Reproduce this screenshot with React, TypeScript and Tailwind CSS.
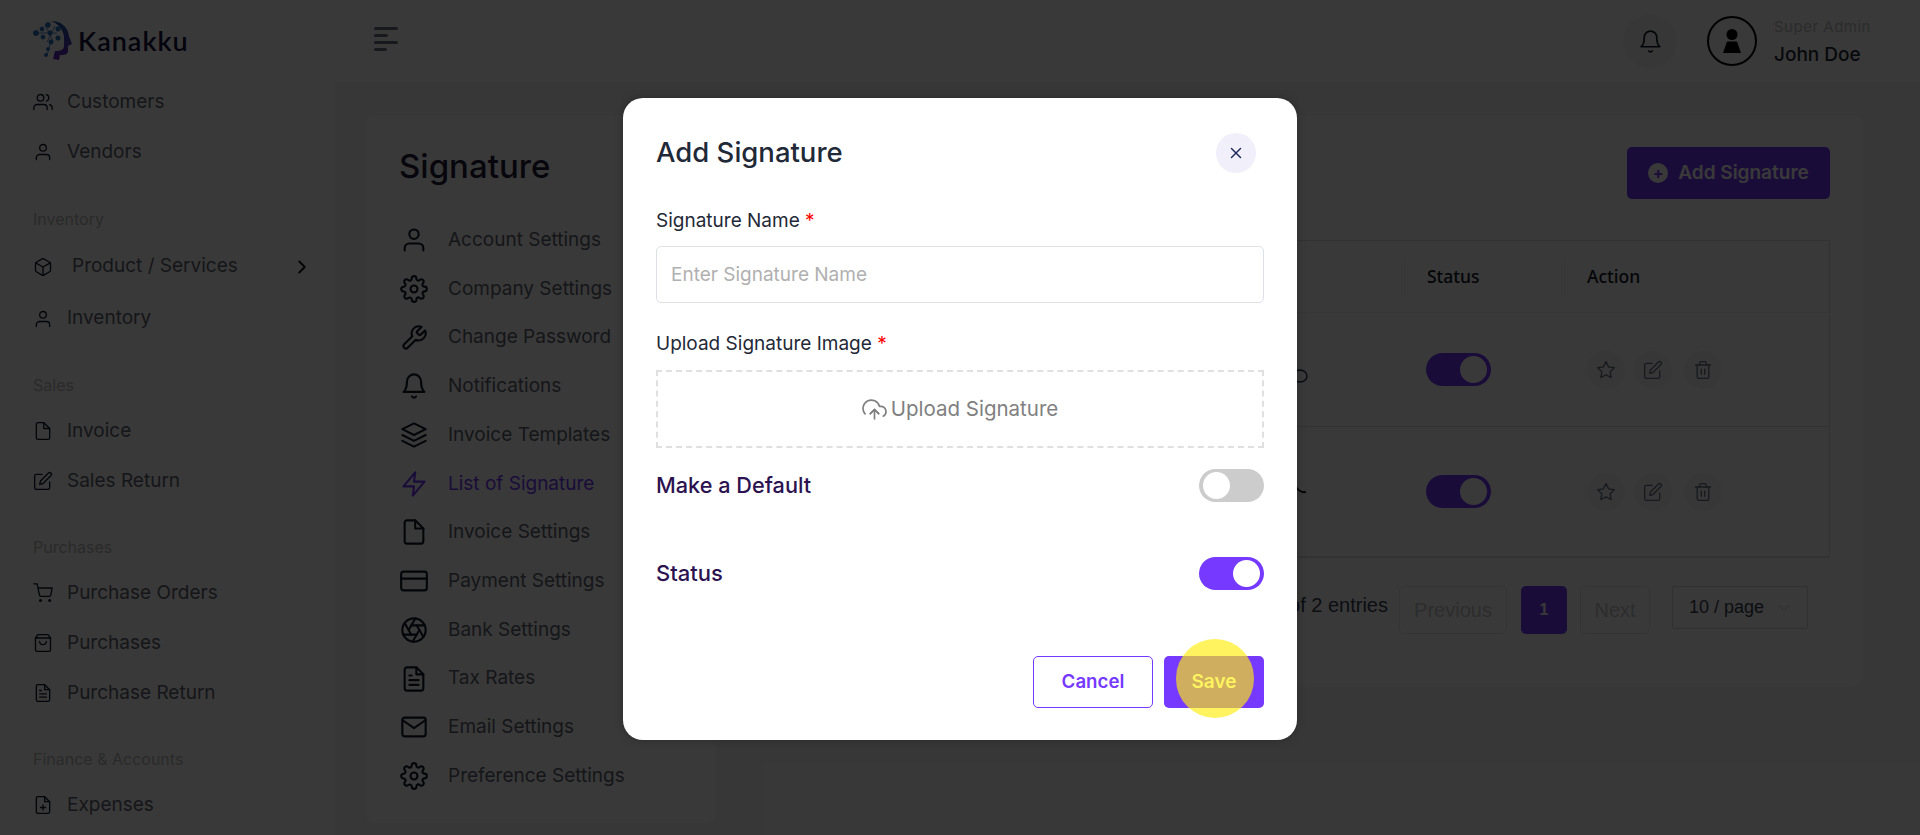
import React from "react";
import { FiUsers, FiUser, FiBox, FiChevronRight, FiFile, FiEdit, FiShoppingCart, FiShoppingBag, FiFileText, FiFilePlus, FiSettings, FiTool, FiBell, FiLayers, FiZap, FiCreditCard, FiAperture, FiMail, FiStar, FiTrash2, FiUploadCloud, FiX, FiChevronDown } from "react-icons/fi";

function Logo() {
  return (
    <svg width="40" height="42" viewBox="0 0 40 42" className="shrink-0">
      <defs>
        <linearGradient id="lg" x1="0" y1="0" x2="0" y2="1">
          <stop offset="0" stopColor="#1d5fa8" />
          <stop offset="1" stopColor="#6a1fc0" />
        </linearGradient>
      </defs>
      <path d="M18 1c10 0 17 6 18 15l3 8-4 2v5c0 3-3 4-6 4h-2l-1 5-6-1 2-8c5 0 9-1 9-5V20c1-8-5-16-13-19z" fill="url(#lg)" />
      <g fill="#2a74c4" stroke="#2a74c4" strokeWidth="0.8">
        <line x1="4" y1="13" x2="24" y2="13" />
        <line x1="12" y1="5" x2="20" y2="21" />
        <line x1="22" y1="6" x2="14" y2="22" />
        <line x1="17" y1="24" x2="14" y2="36" />
        <circle cx="3" cy="13" r="2.6" />
        <circle cx="9" cy="9" r="2" />
        <circle cx="10" cy="17" r="2" />
        <circle cx="15" cy="5" r="2.4" />
        <circle cx="17" cy="13" r="2.2" />
        <circle cx="25" cy="9" r="2.2" />
        <circle cx="25" cy="18" r="2.2" />
        <circle cx="18" cy="22" r="2.2" />
        <circle cx="15" cy="29" r="1.6" />
        <circle cx="13" cy="35" r="1.6" />
      </g>
    </svg>
  );
}

function SideItem({ icon: Icon, label, h = "h-[50px]" }: { icon: any; label: string; h?: string }) {
  return (
    <div className={`flex items-center gap-[14px] ${h}`}>
      <Icon size={20} strokeWidth={1.6} className="text-[#111827] shrink-0" />
      <span className="text-[19px] text-[#5f6470]">{label}</span>
    </div>
  );
}

function SideLabel({ children, pt = "pt-[30px]" }: { children: React.ReactNode; pt?: string }) {
  return <div className={`${pt} pb-[10px] leading-[22px] text-[16px] text-[#bcbcbc]`}>{children}</div>;
}

const settings: [any, string, boolean?][] = [
  [FiUser, "Account Settings"],
  [FiSettings, "Company Settings"],
  [FiTool, "Change Password"],
  [FiBell, "Notifications"],
  [FiLayers, "Invoice Templates"],
  [FiZap, "List of Signature", true],
  [FiFile, "Invoice Settings"],
  [FiCreditCard, "Payment Settings"],
  [FiAperture, "Bank Settings"],
  [FiFileText, "Tax Rates"],
  [FiMail, "Email Settings"],
  [FiSettings, "Preference Settings"],
];

function ActionBtn({ icon: Icon, className = "" }: { icon: any; className?: string }) {
  return (
    <div className={`w-[38px] h-[38px] rounded-full bg-[#f5f5f7] flex items-center justify-center ${className}`}>
      <Icon size={20} strokeWidth={1.6} className="text-[#6b7280]" />
    </div>
  );
}

function PageToggle() {
  return (
    <div className="w-[65px] h-[33px] rounded-full bg-[#7539ff] flex items-center justify-end pr-[4px]">
      <div className="w-[27px] h-[27px] rounded-full bg-white" />
    </div>
  );
}

function Row({ h, art, border }: { h: string; art: React.ReactNode; border: string }) {
  return (
    <div className={`grid grid-cols-[653px_160px_1fr] ${h} ${border}`}>
      <div className="flex items-center justify-end pr-[94px]">{art}</div>
      <div className="flex items-center pl-[22px]"><PageToggle /></div>
      <div className="flex items-center gap-[9px] pl-[23px]">
        <ActionBtn icon={FiStar} />
        <ActionBtn icon={FiEdit} />
        <ActionBtn icon={FiTrash2} className="ml-[3px]" />
      </div>
    </div>
  );
}

export default function App() {
  return (
    <div className="relative h-[835px] w-full overflow-hidden bg-white font-['Inter',sans-serif]">
      <div className="flex h-full">
        <aside className="w-[335px] shrink-0 pl-[33px] bg-white">
          <div className="h-[77px] pt-[20px]">
            <div className="flex items-center gap-[5px]">
              <Logo />
              <span className="text-[27px] font-semibold text-[#131340] font-['Lato','Inter',sans-serif] tracking-[1px]">Kanakku</span>
            </div>
          </div>
          <SideItem icon={FiUsers} label="Customers" />
          <SideItem icon={FiUser} label="Vendors" />
          <SideLabel pt="pt-[31px]">Inventory</SideLabel>
          <div className="flex items-center h-[53px]">
            <FiBox size={20} strokeWidth={1.6} className="text-[#111827] shrink-0" />
            <span className="ml-[19px] text-[19px] text-[#5f6470]">Product / Services</span>
            <FiChevronRight size={22} strokeWidth={2} className="ml-[53px] text-[#111111]" />
          </div>
          <SideItem icon={FiUser} label="Inventory" h="h-[51px]" />
          <SideLabel>Sales</SideLabel>
          <SideItem icon={FiFile} label="Invoice" />
          <SideItem icon={FiEdit} label="Sales Return" />
          <SideLabel>Purchases</SideLabel>
          <SideItem icon={FiShoppingCart} label="Purchase Orders" />
          <SideItem icon={FiShoppingBag} label="Purchases" />
          <SideItem icon={FiFileText} label="Purchase Return" />
          <SideLabel>Finance &amp; Accounts</SideLabel>
          <SideItem icon={FiFilePlus} label="Expenses" />
        </aside>

        <div className="flex-1 flex flex-col min-w-0">
          <header className="h-[82px] shrink-0 bg-white flex items-center pl-[39px] pr-[46px]">
            <div className="flex flex-col gap-[4px] w-[24px] mb-[5px]">
              <div className="h-[3px] w-[24px] bg-[#6b7280] rounded-sm" />
              <div className="h-[3px] w-[14px] bg-[#6b7280] rounded-sm" />
              <div className="h-[3px] w-[24px] bg-[#6b7280] rounded-sm" />
              <div className="h-[3px] w-[13px] bg-[#6b7280] rounded-sm" />
            </div>
            <div className="ml-auto w-[54px] h-[54px] rounded-full bg-[#f7f7f9] flex items-center justify-center">
              <FiBell size={25} strokeWidth={1.6} className="text-[#111827]" />
            </div>
            <div className="ml-[30px] w-[50px] h-[50px] rounded-full border-[2.5px] border-black flex items-center justify-center">
              <svg width="18" height="24" viewBox="0 0 18 24">
                <circle cx="9" cy="5.5" r="5.5" fill="#000" />
                <path d="M4 12.5h10l4 11.5H0z" fill="#000" />
              </svg>
            </div>
            <div className="ml-[17px] w-[100px] flex flex-col pt-[1px]">
              <span className="text-[15px] leading-[26px] text-[#c2c2c2] whitespace-nowrap tracking-[0.5px]">Super Admin</span>
              <span className="text-[19px] leading-[30px] font-medium text-[#1f2937] whitespace-nowrap">John Doe</span>
            </div>
          </header>

          <main className="flex-1 bg-[#f7f7f7] pl-[31px] pr-[58px] pt-[33px] relative">
            <div className="h-[572px] bg-white rounded-[10px] flex">
              <div className="w-[350px] shrink-0 h-[708px] bg-white rounded-[10px] pl-[34px] pt-[32px]">
                <h1 className="text-[33px] leading-[38px] font-medium text-[#1f1b3a] -ml-[1px]">Signature</h1>
                <div className="mt-[31px] flex flex-col">
                  {settings.map(([Icon, label, active]) => (
                    <div key={label} className="flex items-center h-[48.7px]">
                      <Icon size={28} strokeWidth={1.8} className={active ? "text-[#7539ff] shrink-0" : "text-[#111827] shrink-0"} />
                      <span className={`ml-[20px] text-[19px] whitespace-nowrap ${active ? "text-[#7539ff]" : "text-[#5f6470]"}`}>{label}</span>
                    </div>
                  ))}
                </div>
              </div>
              <div className="flex-1 min-w-0 pl-[34px] pr-[32px] pt-[32px]">
                <div className="flex justify-end">
                  <div className="w-[203px] h-[52px] rounded-[5px] bg-[#7539ff] flex items-center justify-center gap-[10px]">
                    <span className="w-[20px] h-[20px] rounded-full bg-white text-[#7539ff] flex items-center justify-center text-[16px] font-bold leading-none">+</span>
                    <span className="text-[19px] font-semibold text-white">Add Signature</span>
                  </div>
                </div>
                <div className="mt-[41px] border border-[#d9dde0] border-b-2">
                  <div className="grid grid-cols-[653px_160px_1fr] h-[72px] border-b border-[#f0f1f3] items-center text-[17.5px] font-medium text-[#111827] font-['Noto_Sans',sans-serif]">
                    <div />
                    <div className="pl-[22px] border-l border-[#f0f1f3] h-[40px] flex items-center">Status</div>
                    <div className="pl-[22px] border-l border-[#f0f1f3] h-[40px] flex items-center">Action</div>
                  </div>
                  <Row
                    h="h-[114px]"
                    border="border-b border-[#d9dde0]"
                    art={<svg width="60" height="30" viewBox="0 0 60 30" fill="none" stroke="#1f2937" strokeWidth="1.4"><ellipse cx="50" cy="21" rx="7" ry="6" /></svg>}
                  />
                  <Row
                    h="h-[129px]"
                    border=""
                    art={<svg width="60" height="30" viewBox="0 0 60 30" fill="none" stroke="#111" strokeWidth="1.8"><path d="M46 10c3 4 6 6 10 5" /></svg>}
                  />
                </div>
                <div className="mt-[28px] pr-[22px] flex items-start justify-end font-['Liberation_Sans',sans-serif] text-[#9ca3af]">
                  <span className="mr-[11px] mt-[5px] text-[20px] leading-[28px] whitespace-nowrap text-[#374151]">Showing 1 to 2 of 2 entries</span>
                  <div className="w-[108px] h-[48px] border border-[#e8e8e8] rounded-[5px] flex items-center justify-center text-[20px] text-[#c8c8c8]">Previous</div>
                  <div className="ml-[14px] w-[46px] h-[48px] rounded-[5px] bg-[#7539ff] text-white flex items-center justify-center text-[16px] font-bold">1</div>
                  <div className="ml-[13px] w-[70px] h-[48px] border border-[#e8e8e8] rounded-[5px] flex items-center justify-center text-[20px] text-[#c8c8c8]">Next</div>
                  <div className="ml-[22px] w-[136px] h-[43px] border border-[#dcdcdc] rounded-[2px] flex items-center pl-[16px] gap-[9px] text-[18px] text-[#374151]">
                    <span className="whitespace-nowrap">10 / page</span>
                    <FiChevronDown size={22} strokeWidth={1} className="text-[#c0c0c0]" />
                  </div>
                </div>
              </div>
            </div>
          </main>
        </div>
      </div>

      <div className="absolute inset-0 bg-black/[0.775] flex justify-center items-start pt-[98px]">
        <div className="relative w-[674px] h-[642px] bg-white rounded-[20px] px-[33px] pt-[32px] shadow-[0_0_8px_rgba(0,0,0,0.25)]">
          <div className="flex items-center justify-between h-[46px]">
            <h2 className="text-[27.5px] font-medium text-[#1f2937] leading-none">Add Signature</h2>
            <div className="w-[40px] h-[40px] rounded-full bg-[#f1f0fa] flex items-center justify-center mr-[8px]">
              <FiX size={18} strokeWidth={2} className="text-[#1e2a5a]" />
            </div>
          </div>
          <div className="mt-[33px] text-[19px] leading-[24px] text-[#1f2937]">Signature Name <span className="text-[#ff0000]">*</span></div>
          <div className="mt-[13px] h-[57px] border border-[#dfe1e6] rounded-[5px] flex items-center pl-[14px] pt-[1px] text-[19px] text-[#b0b0b0]">Enter Signature Name</div>
          <div className="mt-[29px] text-[19px] leading-[24px] text-[#1f2937]">Upload Signature Image <span className="text-[#ff0000]">*</span></div>
          <div className="mt-[14px] h-[78px] border-2 border-dashed border-[#e0e0e0] flex items-center justify-center gap-[4px] text-[#808080]">
            <FiUploadCloud size={25} strokeWidth={1.6} />
            <span className="text-[20.5px]">Upload Signature</span>
          </div>
          <div className="mt-[21px] flex items-center justify-between h-[33px]">
            <span className="text-[21.7px] font-medium text-[#2c1250]">Make a Default</span>
            <div className="w-[65px] h-[33px] rounded-full bg-[#cccccc] flex items-center pl-[4px]">
              <div className="w-[27px] h-[27px] rounded-full bg-white" />
            </div>
          </div>
          <div className="mt-[55px] flex items-center justify-between h-[33px]">
            <span className="text-[22px] font-medium text-[#2c1250]">Status</span>
            <PageToggle />
          </div>
          <div className="mt-[66px] flex justify-end gap-[11px]">
            <div className="w-[120px] h-[52px] rounded-[5px] border border-[#7539ff] text-[#7539ff] flex items-center justify-center text-[18.7px] font-semibold">Cancel</div>
            <div className="w-[100px] h-[52px] rounded-[5px] bg-[#7539ff] text-white flex items-center justify-center text-[19px] font-semibold">Save</div>
          </div>
          <div className="absolute left-[553px] top-[541px] w-[78px] h-[79px] rounded-full bg-[#ffec09]/65" />
        </div>
      </div>
    </div>
  );
}
